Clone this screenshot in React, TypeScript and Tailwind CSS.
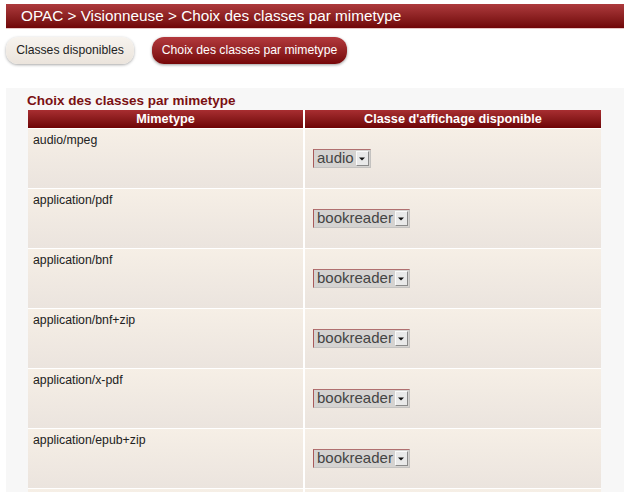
import React from "react";

const rows: { mime: string; cls: string }[] = [
  { mime: "audio/mpeg", cls: "audio" },
  { mime: "application/pdf", cls: "bookreader" },
  { mime: "application/bnf", cls: "bookreader" },
  { mime: "application/bnf+zip", cls: "bookreader" },
  { mime: "application/x-pdf", cls: "bookreader" },
  { mime: "application/epub+zip", cls: "bookreader" },
  { mime: "", cls: "" },
];

function Select({ value }: { value: string }) {
  return (
    <div className="flex items-stretch h-[19px] bg-[#d5d3d1] border border-[#c4c2c0] border-l-[#a85a5a] border-t-[#b07070]">
      <span className="pl-[3px] pr-[2px] text-[15px] leading-[16px] text-[#444]">
        {value}
      </span>
      <span className="w-[13px] my-[1px] mr-[1px] bg-[#e9e9e9] border border-[#8a8a8a] border-l-[#fafafa] border-t-[#fafafa] flex items-center justify-center">
        <svg width="6" height="4" viewBox="0 0 6 4">
          <path d="M0 0.5 L6 0.5 L3 3.5 Z" fill="#111" />
        </svg>
      </span>
    </div>
  );
}

export default function App() {
  return (
    <div
      className="w-[630px] h-[492px] overflow-hidden bg-white"
      style={{ fontFamily: '"Liberation Sans", Arial, sans-serif' }}
    >
      <div className="mx-[6px] mt-[4px] h-[25px] pl-[15px] border-b border-[#e8c7c7] bg-gradient-to-b from-[#ad3a3d] to-[#700507] text-white text-[15.3px] leading-[24px]">
        OPAC &gt; Visionneuse &gt; Choix des classes par mimetype
      </div>
      <div className="flex gap-[18px] ml-[6px] mt-[8px]">
        <div className="h-[27px] w-[128px] rounded-[12px] bg-gradient-to-b from-[#f7f3ee] to-[#ebe4dc] shadow-[0_1px_3px_rgba(0,0,0,0.35)] flex items-center justify-center text-[12.2px] text-[#222]">
          Classes disponibles
        </div>
        <div className="h-[27px] w-[195px] rounded-[12px] bg-gradient-to-b from-[#b3393d] to-[#760709] shadow-[0_1px_3px_rgba(0,0,0,0.4)] flex items-center justify-center text-[12.2px] text-white">
          Choix des classes par mimetype
        </div>
      </div>
      <div className="mx-[6px] mt-[24px] bg-[#f7f7f7] pl-[21px] pt-[5px] h-[420px]">
        <div className="text-[13.5px] leading-[16px] font-bold text-[#7a1012]">
          Choix des classes par mimetype
        </div>
        <div className="mt-[1px] ml-px w-[573px] bg-white grid grid-cols-[275px_296px] gap-x-[2px] gap-y-px">
          <div className="h-[18px] bg-gradient-to-b from-[#a82e31] to-[#6e0406] text-white font-bold text-[12.7px] leading-[18px] text-center">
            Mimetype
          </div>
          <div className="h-[18px] bg-gradient-to-b from-[#a82e31] to-[#6e0406] text-white font-bold text-[12.7px] leading-[18px] text-center">
            Classe d'affichage disponible
          </div>
          {rows.map((r, i) => (
            <React.Fragment key={i}>
              <div className="h-[59px] bg-gradient-to-b from-[#f6efe6] to-[#ebe4de] pl-[5px] pt-[4px] text-[12.3px] leading-[14px] text-[#222]">
                {r.mime}
              </div>
              <div className="h-[59px] bg-gradient-to-b from-[#f6efe6] to-[#ebe4de] pl-[8px] flex items-center">
                {r.cls && <Select value={r.cls} />}
              </div>
            </React.Fragment>
          ))}
        </div>
      </div>
    </div>
  );
}
